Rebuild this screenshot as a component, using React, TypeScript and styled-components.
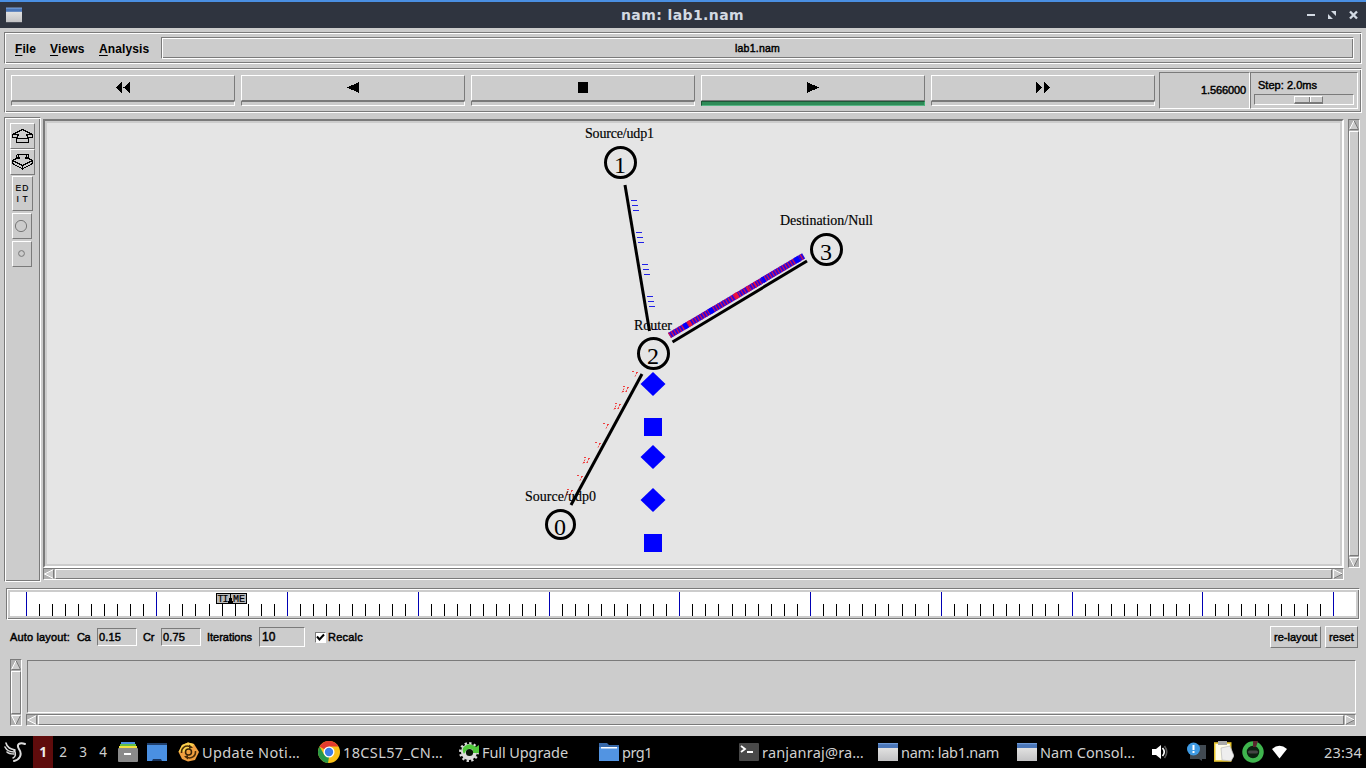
import React, { useLayoutEffect, useRef, useState } from "react";
import styled, { createGlobalStyle, css } from "styled-components";

const FACE = "#cccccc";
const DARK = "#7a7a7a";
const LIGHT = "#ffffff";

const GlobalStyle = createGlobalStyle`
  * { box-sizing: border-box; }
  html, body { margin: 0; padding: 0; background: #000; overflow: hidden; }
  svg { display: block; flex: none; }
`;

const groove = css`
  border: 1px solid;
  border-color: ${DARK} ${LIGHT} ${LIGHT} ${DARK};
  box-shadow: inset 1px 1px 0 ${LIGHT}, inset -1px -1px 0 ${DARK};
`;
const raised = css`
  border: 1px solid;
  border-color: ${LIGHT} ${DARK} ${DARK} ${LIGHT};
`;
const sunken = css`
  border: 1px solid;
  border-color: ${DARK} ${LIGHT} ${LIGHT} ${DARK};
`;

/* A run of text whose tracking is adjusted to fill the given width. */
const Run = styled.span<{ $w: number }>`
  display: block;
  flex: none;
  width: ${(p) => p.$w}px;
  white-space: nowrap;
`;
function Fit({ w, children }: { w: number; children: string }) {
  const ref = useRef<HTMLSpanElement>(null);
  const [track, setTrack] = useState(0);
  useLayoutEffect(() => {
    const natural = ref.current!.getBoundingClientRect().width;
    setTrack((w - natural) / children.length);
  }, [w, children]);
  return (
    <Run $w={w}>
      <span ref={ref} style={{ letterSpacing: track }}>{children}</span>
    </Run>
  );
}

const Screen = styled.div`
  width: 1366px;
  height: 768px;
  display: flex;
  flex-direction: column;
  overflow: hidden;
  background: ${FACE};
  color: #000;
  font: 11px/14px "Liberation Sans", Arial, sans-serif;
  -webkit-text-stroke: 0.45px currentColor;
`;

/* ---------- title bar ---------- */
const TitleBar = styled.header`
  height: 28px;
  flex: none;
  border-top: 2px solid #4a8fe2;
  background: #2f343f;
  display: grid;
  grid-template-columns: 1fr auto 1fr;
  align-items: center;
  padding: 0 8px;
  padding-left: 6px;
  color: #d3dae3;
  font: bold 14px/26px "DejaVu Sans", sans-serif;
  -webkit-text-stroke: 0;
`;
const TitleText = styled.div`
  padding-left: 1px;
`;
const TitleControls = styled.div`
  display: flex;
  justify-content: flex-end;
`;

function WindowIcon({ size = 16 }: { size?: number }) {
  return (
    <svg width={size} height={size} viewBox="0 0 20 20">
      <defs>
        <linearGradient id="winBody" x1="0" y1="0" x2="0" y2="1">
          <stop offset="0" stopColor="#eeeeec" />
          <stop offset="1" stopColor="#c2c2c4" />
        </linearGradient>
      </defs>
      <rect y="1" width="20" height="18" fill="url(#winBody)" />
      <rect y="1" width="20" height="5" fill="#4a76b8" />
      <rect y="1" width="20" height="1.2" fill="#6f9bd8" />
    </svg>
  );
}

/* ---------- menu bar ---------- */
const MenuBar = styled.nav`
  ${groove}
  height: 32px;
  flex: none;
  margin: 4px 4px 4px;
  padding: 4px 7px 4px 10px;
  display: flex;
  align-items: center;
  font-size: 12px;
  font-weight: bold;
  -webkit-text-stroke: 0;
`;
const MenuItem = styled.div<{ $w: number }>`
  width: ${(p) => p.$w}px;
  flex: none;
  display: flex;
  padding-top: 1px;
  letter-spacing: 0.1px;
  u { text-decoration-thickness: 1px; text-underline-offset: 2px; }
`;
const FileLabel = styled.div`
  ${groove}
  flex: 1;
  height: 22px;
  margin-left: 1px;
  display: flex;
  align-items: center;
  justify-content: center;
  font-size: 10.5px;
  font-weight: normal;
  -webkit-text-stroke: 0.45px currentColor;
`;

/* ---------- transport bar ---------- */
const Transport = styled.div`
  ${groove}
  height: 45px;
  flex: none;
  margin: 0 4px 4px;
  padding: 3px 3px 3px 6px;
  display: flex;
`;
const Deck = styled.div`
  display: flex;
  gap: 6px;
  padding-top: 3px;
  width: 1148px;
  flex: none;
`;
const DeckColumn = styled.div`
  width: 224px;
`;
const DeckButton = styled.div`
  ${raised}
  height: 26px;
  padding-bottom: 1px;
  display: flex;
  align-items: center;
  justify-content: center;
`;
const Led = styled.div<{ $on?: boolean }>`
  ${sunken}
  height: 5px;
  ${(p) => p.$on && css`background: #2e8b57; border-color: #1d5737 #45b577 #58b585 #1d5737;`}
`;
const Clock = styled.div`
  ${sunken}
  width: 91px;
  height: 37px;
  display: flex;
  align-items: center;
  justify-content: flex-end;
  padding: 0 3px 1px 0;
`;
const StepBox = styled.div`
  ${sunken}
  width: 108px;
  height: 37px;
  padding: 5px 3px 0;
`;
const StepLabel = styled.div`
  padding-left: 4px;
  height: 16px;
`;
const Trough = styled.div`
  ${sunken}
  height: 11px;
  padding: 1px 0 0 39px;
`;
const Thumb = styled.div`
  ${raised}
  width: 29px;
  height: 8px;
  display: flex;
  border-bottom-width: 2px;
  &::before {
    content: "";
    width: 14px;
    border-right: 1px solid ${DARK};
    box-shadow: 1px 0 0 ${LIGHT};
  }
`;

/* ---------- main area ---------- */
const Main = styled.div`
  height: 465px;
  flex: none;
  display: flex;
  margin: 0 4px 6px;
`;
const SideBar = styled.aside`
  ${groove}
  width: 37px;
  padding: 5px 0 0 5px;
  margin-right: 2px;
  display: flex;
  flex-direction: column;
`;
const SideButton = styled.div<{ $w: number; $h: number; $x?: number; $gap?: number }>`
  ${raised}
  width: ${(p) => p.$w}px;
  height: ${(p) => p.$h}px;
  margin: 0 0 ${(p) => p.$gap ?? 0}px ${(p) => p.$x ?? 0}px;
  display: flex;
  flex-direction: column;
  align-items: center;
  justify-content: center;
  font: 8.5px/11px "Liberation Sans", sans-serif;
  -webkit-text-stroke: 0.2px currentColor;
`;
const Stage = styled.div`
  width: 1301px;
  padding-top: 2px;
`;
const Canvas = styled.div`
  height: 449px;
  border: 2px solid;
  border-color: ${DARK} ${LIGHT} ${LIGHT} ${DARK};
  padding: 2px;
  svg { background: #e5e5e5; }
`;
const Bar = styled.div<{ $vertical?: boolean; $len: number }>`
  ${sunken}
  background: #b0b0b0;
  flex: none;
  display: flex;
  flex-direction: ${(p) => (p.$vertical ? "column" : "row")};
  gap: 1px;
  width: ${(p) => (p.$vertical ? 12 : p.$len)}px;
  height: ${(p) => (p.$vertical ? p.$len : 12)}px;
`;
const Slider = styled.div`
  ${raised}
  background: ${FACE};
  flex: 1;
`;
const MainScroll = styled.div`
  padding: 2px 0 0 4px;
`;

const arrowTurn = { up: 0, right: 90, down: 180, left: 270 };
function Arrow({ dir }: { dir: keyof typeof arrowTurn }) {
  const lit = dir === "up" || dir === "left";
  return (
    <svg width="10" height="10" viewBox="0 0 10 10">
      <g transform={`rotate(${arrowTurn[dir]} 5 5)`}>
        <path d="M5 .5L9.5 9.5H.5Z" fill={FACE} />
        <path d="M5 .5L.5 9.5" stroke={dir === "down" ? DARK : LIGHT} fill="none" />
        <path d="M5 .5L9.5 9.5" stroke={dir === "up" || dir === "right" ? DARK : LIGHT} fill="none" />
        <path d="M.5 9.5H9.5" stroke={lit ? DARK : LIGHT} fill="none" />
      </g>
    </svg>
  );
}
function ScrollBar({ vertical, len }: { vertical?: boolean; len: number }) {
  return (
    <Bar $vertical={vertical} $len={len}>
      <Arrow dir={vertical ? "up" : "left"} />
      <Slider />
      <Arrow dir={vertical ? "down" : "right"} />
    </Bar>
  );
}

/* ---------- network drawing ---------- */
const nodes = [
  { id: "1", x: 620.5, y: 162.5, r: 15, label: "Source/udp1", lx: 585, ly: 138, lw: 69 },
  { id: "3", x: 826.5, y: 249.5, r: 15, label: "Destination/Null", lx: 780, ly: 225, lw: 93 },
  { id: "2", x: 653.5, y: 353.5, r: 15, label: "Router", lx: 634, ly: 330, lw: 38 },
  { id: "0", x: 560.5, y: 524.5, r: 14, label: "Source/udp0", lx: 525, ly: 501, lw: 71 },
];
const links = [
  [625, 185, 649.5, 331],
  [672.5, 342, 807, 261],
  [571, 505, 642, 374],
];
const bluePackets = [
  [631, 200], [632, 205], [633, 210], [636, 232], [637, 237], [638, 242],
  [642, 264], [643, 269], [644, 274], [647, 296], [648, 301], [649, 306], [652, 329],
];
/* origin and the number of upright dashes of each packet on the link 0-2 */
const redPackets = [
  [632, 371, 1], [623, 386, 2], [615, 403, 2], [603, 423, 1],
  [595, 442, 1], [584, 457, 2], [577, 475, 1], [567, 489, 2],
];
const solidSpans: [number, number, string][] = [
  [17, 4, "#0000ff"], [22, 3, "#f0103c"], [46, 5, "#0000ff"],
  [76, 4, "#f0103c"], [91, 1.5, "#f0103c"], [99, 1.5, "#f0103c"], [108, 3, "#0000ff"], [146, 5, "#0000ff"],
];

function Network() {
  return (
    <svg width="1293" height="441" viewBox="47 123 1293 441" fontWeight="normal" style={{ WebkitTextStroke: 0 }}>
      {bluePackets.map(([x, y]) => (
        <rect key={y} x={x} y={y} width="6" height="1" fill="#2020e8" />
      ))}
      {redPackets.map(([x, y, n]) => (
        <g key={y} stroke="#ee4040" strokeWidth="1">
          <path d={`M${x} ${y + 0.5}h3M${x + 4} ${y + 1.5}h2`} strokeDasharray="2 1" />
          <path d={`M${x + 5} ${y + 1.5}l-2 4`} strokeDasharray="2 1" />
          {n > 1 && <path d={`M${x + 1} ${y + 2.5}l-2 4M${x - 1} ${y + 5.5}h5`} strokeDasharray="2 1.5" />}
        </g>
      ))}
      <g transform="translate(669.5 335.5) rotate(-30.7)">
        <rect y="-3" width="156" height="6" fill="#2c06dc" />
        {Array.from({ length: 52 }, (_, i) => (
          <rect key={i} x={i * 3} y="-3" width="1.1" height="6" fill="#e01048" />
        ))}
        {solidSpans.map(([x, w, c]) => (
          <rect key={x} x={x} y="-3" width={w} height="6" fill={c} />
        ))}
      </g>
      {links.map(([a, b, c, d]) => (
        <line key={a} x1={a} y1={b} x2={c} y2={d} stroke="#000" strokeWidth="3" />
      ))}
      {nodes.map((n) => (
        <g key={n.id} fontFamily="Liberation Serif, serif">
          <circle cx={n.x} cy={n.y} r={n.r} fill="none" stroke="#000" strokeWidth="3" />
          <text x={n.x - 0.5} y={n.y + 10.5} fontSize="24" textAnchor="middle">{n.id}</text>
          <text x={n.lx} y={n.ly} fontSize="14" textLength={n.lw} stroke="#000" strokeWidth=".15">{n.label}</text>
        </g>
      ))}
      <g fill="#0000ff">
        {[384, 457, 500].map((y) => (
          <path key={y} d={`M653 ${y - 12}L665.5 ${y}L653 ${y + 12}L640.5 ${y}Z`} />
        ))}
        <rect x="644" y="418" width="18" height="18" />
        <rect x="644" y="534" width="18" height="18" />
      </g>
    </svg>
  );
}

/* ---------- time line ---------- */
const TimeLine = styled.div`
  ${groove}
  height: 32px;
  flex: none;
  margin: 0 6px 6px;
  padding: 3px;
`;
function Ruler() {
  return (
    <svg width="1346" height="24" viewBox="10 592 1346 24" shapeRendering="crispEdges" style={{ WebkitTextStroke: 0 }}>
      <rect x="10" y="592" width="1346" height="24" fill="#fff" />
      {Array.from({ length: 101 }, (_, i) => {
        const x = Math.floor(26 + i * 13.075);
        return i % 10 === 0 ? (
          <rect key={i} x={x} y="592" width="1" height="24" fill="#0000b4" />
        ) : (
          <rect key={i} x={x} y="604" width="1" height="12" fill="#000" />
        );
      })}
      <rect x="216" y="593" width="31" height="11" fill="#000" />
      <rect x="217" y="594" width="29" height="9" fill="#b8b8b8" />
      <g fontFamily="Liberation Mono, monospace" fontSize="10" stroke="#000" strokeWidth=".2">
        <text x="217.500" y="602" textLength="11">TI</text>
        <text x="233" y="602" textLength="12">ME</text>
      </g>
      <path d="M230.500 594L233 603H228Z" fill="#000" />
    </svg>
  );
}

/* ---------- layout controls ---------- */
const Controls = styled.div`
  height: 22px;
  flex: none;
  margin: 0 8px 11px 10px;
  display: flex;
  align-items: center;
`;
const Lead = styled.div`
  width: 67px;
`;
const Entry = styled.div<{ $w: number; $big?: boolean }>`
  ${sunken}
  width: ${(p) => p.$w}px;
  height: ${(p) => (p.$big ? 20 : 18)}px;
  margin: 0 6px 0 7px;
  padding-left: ${(p) => (p.$big ? 2 : 1)}px;
  display: flex;
  align-items: center;
  font-size: ${(p) => (p.$big ? 12 : 11)}px;
`;
const Check = styled.div`
  width: 11px;
  height: 11px;
  margin: 0 2px 0 4px;
  background: #fff;
  border: 1px solid;
  border-color: ${DARK} ${LIGHT} ${LIGHT} ${DARK};
`;
const Push = styled.div<{ $w: number }>`
  ${raised}
  width: ${(p) => p.$w}px;
  height: 22px;
  margin-left: 4px;
  display: flex;
  align-items: center;
  justify-content: center;
`;
const Spacer = styled.div`
  flex: 1;
`;

/* ---------- annotation pane ---------- */
const Notes = styled.div`
  height: 77px;
  flex: none;
  display: flex;
  gap: 4px;
  padding-left: 10px;
`;
const NotesPane = styled.div`
  width: 1330px;
`;
const NotesBox = styled.div`
  ${sunken}
  margin: 1px 0 1px 1px;
  height: 53px;
`;

/* ---------- desktop panel ---------- */
const Panel = styled.footer`
  height: 32px;
  flex: none;
  background: #000;
  color: #d0d0d0;
  display: flex;
  align-items: center;
  font: 14.5px/32px "Noto Sans", sans-serif;
  -webkit-text-stroke: 0;
`;
const Launcher = styled.div`
  width: 33px;
  padding-left: 4px;
`;
const Workspace = styled.div<{ $on?: boolean }>`
  width: 20px;
  text-align: center;
  font-size: 13.5px;
  line-height: 33px;
  height: 32px;
  ${(p) => p.$on && css`background: #5f0c0c; color: #eee; font-weight: bold;`}
`;
const Quick = styled.div`
  width: 65px;
  padding-left: 5px;
  display: flex;
  gap: 9px;
`;
const Task = styled.div<{ $w: number }>`
  width: ${(p) => p.$w}px;
  display: flex;
  align-items: center;
  gap: 3px;
`;
const Tray = styled.div`
  display: flex;
  align-items: center;
  gap: 8px;
  width: 173px;
`;

export default function App() {
  return (
    <Screen>
      <GlobalStyle />
      <TitleBar>
        <WindowIcon />
        <TitleText><Fit w={123}>nam: lab1.nam</Fit></TitleText>
        <TitleControls>
          <svg width="52" height="10" viewBox="0 0 52 10" fill="#d3dae3">
            <rect x="1" y="4" width="8" height="2" />
            <path d="M25 1h5v5zM22 4v5h5z" />
            <path d="M44 1.500l7 7M51 1.500l-7 7" stroke="#d3dae3" strokeWidth="2.400" />
          </svg>
        </TitleControls>
      </TitleBar>

      <MenuBar>
        <MenuItem $w={35}><u>F</u>ile</MenuItem>
        <MenuItem $w={49}><u>V</u>iews</MenuItem>
        <MenuItem $w={61}><u>A</u>nalysis</MenuItem>
        <FileLabel><Fit w={45}>lab1.nam</Fit></FileLabel>
      </MenuBar>

      <Transport>
        <Deck>
          {["M6 0V11L0 5.500ZM14 0V11L7.500 5.500Z", "M12 0V11L0 5.500Z", "M1 0H11V11H1Z", "M0 0V11L12 5.500Z", "M0 0V11L6 5.500ZM8 0V11L14 5.500Z"].map((d, i) => (
            <DeckColumn key={d}>
              <DeckButton>
                <svg width={i === 0 || i === 4 ? 14 : 12} height="11" shapeRendering="crispEdges"><path d={d} /></svg>
              </DeckButton>
              <Led $on={i === 3} />
            </DeckColumn>
          ))}
        </Deck>
        <Clock><Fit w={45}>1.566000</Fit></Clock>
        <StepBox>
          <StepLabel><Fit w={59}>Step: 2.0ms</Fit></StepLabel>
          <Trough><Thumb /></Trough>
        </StepBox>
      </Transport>

      <Main>
        <SideBar>
          <SideButton $w={25} $h={26} $x={0}>
            <svg width="21" height="15" viewBox="0 0 21 15" fill="none" stroke="#000" shapeRendering="crispEdges">
              <path d="M10.500 .5L20.500 5.500V8.500H16.500L14.500 5.500M10.500 .5L.5 5.500V8.500H4.500L6.500 5.500M.5 5.500H6.500M14.500 5.500H20.500M6.500 5.500L4.500 9.500V13.500H16.500V9.500L14.500 5.500M4.500 9.500H16.500" />
            </svg>
          </SideButton>
          <SideButton $w={25} $h={26} $gap={1}>
            <svg width="21" height="16" viewBox="0 0 21 16" fill="none" stroke="#000" shapeRendering="crispEdges">
              <path d="M4.500 .5H16.500M4.500 .5V3.500H6.500V1.500L7.500 4.500H4.500L.5 6.500M16.500 .5V3.500H14.500V1.500L13.500 4.500H16.500L20.500 6.500M.5 6.500V9.500L10.500 15L20.500 9.500V6.500L10.500 11.500L.5 6.500M10.500 11.500V15" />
            </svg>
          </SideButton>
          <SideButton $w={21} $h={35} $x={2} $gap={2}>
            <Fit w={14}>ED</Fit>
            <Fit w={12}>I T</Fit>
          </SideButton>
          <SideButton $w={20} $h={26} $x={2} $gap={2}>
            <svg width="14" height="13" fill="none" stroke="#777"><circle cx="6" cy="6" r="5.600" /></svg>
          </SideButton>
          <SideButton $w={20} $h={26} $x={2}>
            <svg width="8" height="8" fill="none" stroke="#777"><circle cx="3.500" cy="3.500" r="2.900" /></svg>
          </SideButton>
        </SideBar>
        <Stage>
          <Canvas><Network /></Canvas>
          <ScrollBar len={1301} />
        </Stage>
        <MainScroll><ScrollBar vertical len={449} /></MainScroll>
      </Main>

      <TimeLine><Ruler /></TimeLine>

      <Controls>
        <Lead><Fit w={60}>Auto layout:</Fit></Lead>
        <Fit w={13}>Ca</Fit>
        <Entry $w={40}><Fit w={22}>0.15</Fit></Entry>
        <Fit w={11}>Cr</Fit>
        <Entry $w={40}><Fit w={22}>0.75</Fit></Entry>
        <Fit w={45}>Iterations</Fit>
        <Entry $w={46} $big>10</Entry>
        <Check>
          <svg width="9" height="9" fill="none" stroke="#000" strokeWidth="2"><path d="M1 3.500L3.500 6.500L8 1.500" /></svg>
        </Check>
        <Fit w={35}>Recalc</Fit>
        <Spacer />
        <Push $w={51}><Fit w={43}>re-layout</Fit></Push>
        <Push $w={33}><Fit w={25}>reset</Fit></Push>
      </Controls>

      <Notes>
        <ScrollBar vertical len={67} />
        <NotesPane>
          <NotesBox />
          <ScrollBar len={1330} />
        </NotesPane>
      </Notes>

      <Panel>
        <Launcher>
          <svg width="22" height="22" viewBox="0 0 22 22" fill="none" stroke="#ddd" strokeLinecap="round">
            <path d="M2 2C3 7 7 8 11 9M1 6C3 10 6 11 10 11M3 11C5 13 7 13 10 13" strokeWidth="1.600" />
            <path d="M21 3C16 1 12 3 15 8C19 14 15 19 10 20" strokeWidth="2" />
            <path d="M10 9C13 13 11 16 9 17" strokeWidth="1.500" />
          </svg>
        </Launcher>
        <Workspace $on>1</Workspace>
        <Workspace>2</Workspace>
        <Workspace>3</Workspace>
        <Workspace>4</Workspace>
        <Quick>
          <svg width="20" height="20">
            <rect x="3" width="14" height="3" fill="#4a90e2" />
            <rect x="2" y="2" width="16" height="2" fill="#63c048" />
            <rect x="1" y="4" width="18" height="2" fill="#f2e23c" />
            <rect y="6" width="20" height="14" rx="1" fill="#8a8a8a" />
            <rect x="6" y="11" width="7" height="2" fill="#fff" />
          </svg>
          <svg width="20" height="20">
            <rect y="1" width="20" height="18" fill="#4a90e2" />
            <rect y="1" width="20" height="2" fill="#1f3f6c" />
            <path d="M5 19l1-2h8l1 2z" fill="#17335c" />
          </svg>
        </Quick>

        <Task $w={140}>
          <svg width="21" height="20" viewBox="0 0 21 20">
            <path d="M4 3L10 .5L16 2L21 10L17 18L10 19.500L4 17L.5 10Z" fill="#f2a040" />
            <path d="M4 3L10 .5L16 2L13 7L5 10L.5 10Z" fill="#fbd04c" />
            <circle cx="10.500" cy="10" r="3" fill="none" stroke="#3a2408" strokeWidth="1.500" />
            <path d="M3.500 11C3 6 7 3 12 4.500M17.500 9C18 14 14 17 9 15.500" fill="none" stroke="#4a2c08" strokeWidth="1.500" />
            <path d="M11 2.500L15 5.500L11 7ZM10 17.500L6 14.500L10 13Z" fill="#4a2c08" />
          </svg>
          <Fit w={98}>Update Noti…</Fit>
        </Task>
        <Task $w={141}>
          <svg width="22" height="22" viewBox="0 0 22 22">
            <circle cx="11" cy="11" r="11" fill="#fbc116" />
            <path d="M11 11L1.500 5.500A11 11 0 0 1 20.500 5.500H11Z" fill="#e33b2e" />
            <path d="M1.500 5.500L6.200 13.800L11 16L10 22A11 11 0 0 1 1.500 5.500Z" fill="#279847" />
            <circle cx="11" cy="11" r="5.500" fill="#fff" />
            <circle cx="11" cy="11" r="4.200" fill="#3b7de8" />
          </svg>
          <Fit w={100}>18CSL57_CN…</Fit>
        </Task>
        <Task $w={140}>
          <svg width="20" height="20" viewBox="0 0 20 20">
            <circle cx="10" cy="10" r="8.800" fill="none" stroke="#ddd" strokeWidth="2.400" strokeDasharray="2.300 2.300" />
            <circle cx="10" cy="10" r="8" fill="#ddd" />
            <path d="M4 6Q10 -1 17 5L20 3V11H12L14 8Q9 4 5 12Q3 9 4 6Z" fill="#4fc83a" />
            <circle cx="10.500" cy="10.500" r="3.600" fill="#061306" />
          </svg>
          <Fit w={86}>Full Upgrade</Fit>
        </Task>
        <Task $w={140}>
          <svg width="20" height="20">
            <path d="M0 1H8L10 3H20V19H0Z" fill="#3768a8" />
            <rect y="5" width="20" height="14" fill="#5294e2" />
            <rect x="2" y="5" width="16" height="1.500" fill="#fff" />
          </svg>
          <Fit w={30}>prg1</Fit>
        </Task>
        <Task $w={139}>
          <svg width="20" height="20">
            <rect y="1" width="20" height="18" rx="1" fill="#494949" />
            <path d="M2 4L6 7L2 10M8 10H14" stroke="#fff" strokeWidth="1.800" fill="none" />
          </svg>
          <Fit w={102}>ranjanraj@ra…</Fit>
        </Task>
        <Task $w={139}>
          <WindowIcon size={20} />
          <Fit w={98}>nam: lab1.nam</Fit>
        </Task>
        <Task $w={134}>
          <WindowIcon size={20} />
          <Fit w={95}>Nam Consol…</Fit>
        </Task>

        <Tray>
          <svg width="28" height="18" viewBox="0 0 28 18">
            <path d="M1 6H5L10 2V16L5 12H1Z" fill="#fff" />
            <path d="M11.500 5Q15 9 11.500 13" stroke="#fff" strokeWidth="1.600" fill="none" />
            <path d="M13.500 3Q18 9 13.500 15" stroke="#555" strokeWidth="1.600" fill="none" />
          </svg>
          <svg width="19" height="20">
            <path d="M3 3H19V17H15V19L12 17H3Z" fill="#414a52" />
            <circle cx="6.500" cy="7" r="6.500" fill="#3f9be4" />
            <rect x="5.500" y="3" width="2" height="5" fill="#fff" />
            <rect x="5.500" y="9" width="2" height="2" fill="#fff" />
          </svg>
          <svg width="20" height="22">
            <rect x="0.700" y="2" width="16" height="18" fill="#fffde8" stroke="#e6c42c" strokeWidth="1.600" />
            <rect x="4" y="0" width="9" height="4" fill="#aaa" />
            <path d="M7 7L16 5L20 15L17 20L8 19Z" fill="#eee" stroke="#bbb" strokeWidth=".7" />
          </svg>
          <svg width="22" height="22">
            <circle cx="11" cy="11" r="8.500" fill="#0b2010" stroke="#3fb54e" strokeWidth="4.500" />
            <path d="M11 0H16L14 6H11Z" fill="#5a2630" />
            <rect x="6" y="9.500" width="10" height="3" rx="1.500" fill="#444" />
          </svg>
          <svg width="15" height="14">
            <path d="M0 4Q7.500 -2.500 15 4L7.500 13.500Z" fill="#fff" />
          </svg>
        </Tray>
        <Fit w={38}>23:34</Fit>
      </Panel>
    </Screen>
  );
}
